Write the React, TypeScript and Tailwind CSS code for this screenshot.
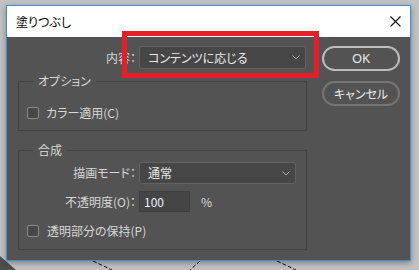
import React from "react";

const font = "font-['Noto_Sans_CJK_JP','Noto_Sans',sans-serif] [font-feature-settings:'palt']";

function Chevron() {
  return (
    <svg width="8" height="5" viewBox="0 0 8 5" className="shrink-0">
      <path d="M0.5 0.5 L4 4 L7.5 0.5" fill="none" stroke="#a8a8a8" strokeWidth="1" />
    </svg>
  );
}

function Checkbox() {
  return <div className="w-[12px] h-[12px] rounded-[2px] border border-[#8a8a8a] bg-[#474747] shrink-0" />;
}

export default function App() {
  return (
    <div className={`relative w-[419px] h-[270px] overflow-hidden bg-[#c2c2c2] pt-[5px] pl-[6px] ${font}`}>
      {/* background marks */}
      <svg className="absolute left-0 top-0" width="419" height="270" viewBox="0 0 419 270">
        <polygon points="0,256 0,270 16,270" fill="#3a3a3a" opacity="0.85" />
        <line x1="93" y1="261" x2="112" y2="270" stroke="#111" strokeWidth="1" strokeDasharray="4 2" />
        <line x1="200" y1="261" x2="190" y2="270" stroke="#111" strokeWidth="1" strokeDasharray="4 2" />
        <line x1="277" y1="261" x2="296" y2="270" stroke="#111" strokeWidth="1" strokeDasharray="4 2" />
      </svg>

      <div className="relative w-[405px] h-[256px] border border-[#3a8fdf] flex flex-col shadow-[0_2px_6px_rgba(0,0,0,0.35)]">
        {/* title bar */}
        <div className="h-[31px] bg-white flex items-center justify-between pl-[9px] pr-[9px] shrink-0">
          <span className="text-[12px] text-black leading-none">塗りつぶし</span>
          <svg width="11" height="11" viewBox="0 0 11 11">
            <path d="M0.5 0.5 L10.5 10.5 M10.5 0.5 L0.5 10.5" stroke="#111" strokeWidth="1.1" />
          </svg>
        </div>

        {/* content */}
        <div className="flex-1 bg-[#535353] flex pt-[9px] pl-[11px] text-[12px] text-[#d8d8d8]">
          {/* left column */}
          <div className="w-[289px] flex flex-col">
            <div className="flex items-center h-[23px]">
              <div className="w-[118px] text-right leading-none">内容：</div>
              <div className="ml-[3px] w-[167px] h-[23px] rounded-[3px] border border-[#636363] bg-[#464646] flex items-center justify-between pl-[8px] pr-[5px]">
                <span className="text-[#ececec] leading-none">コンテンツに応じる</span>
                <Chevron />
              </div>
            </div>

            <fieldset className="mt-[4px] border border-[#414141] px-0 pt-[18px] pb-[11px] m-0 min-w-0">
              <legend className="ml-[14px] px-[5px] h-[16px] leading-[16px] text-[#d8d8d8]">オプション</legend>
              <div className="flex items-center pl-[8px] h-[12px]">
                <Checkbox />
                <span className="ml-[7px] leading-none">カラー適用(C)</span>
              </div>
            </fieldset>

            <fieldset className="mt-[11px] border border-[#414141] px-0 pt-[4px] pb-[12px] m-0 min-w-0">
              <legend className="ml-[14px] px-[5px] h-[16px] leading-[16px] text-[#d8d8d8]">合成</legend>
              <div className="flex items-center h-[22px]">
                <div className="w-[117px] text-right leading-none">描画モード：</div>
                <div className="ml-[3px] w-[157px] h-[22px] rounded-[3px] border border-[#636363] bg-[#464646] flex items-center justify-between pl-[8px] pr-[5px]">
                  <span className="text-[#ececec] leading-none">通常</span>
                  <Chevron />
                </div>
              </div>
              <div className="flex items-center h-[21px] mt-[7px]">
                <div className="w-[117px] text-right leading-none">不透明度(O)：</div>
                <div className="ml-[3px] w-[51px] h-[21px] border border-[#3e3e3e] bg-[#454545] flex items-center pl-[4px]">
                  <span className="text-[#eef2f6] leading-none">100</span>
                </div>
                <span className="ml-[11px] leading-none">%</span>
              </div>
              <div className="flex items-center pl-[8px] h-[12px] mt-[13px]">
                <Checkbox />
                <span className="ml-[8px] leading-none">透明部分の保持(P)</span>
              </div>
            </fieldset>
          </div>

          {/* right column */}
          <div className="ml-[15px] flex flex-col gap-[10px]">
            <div className="w-[78px] h-[25px] rounded-full border-2 border-[#bdbdbd] flex items-center justify-center text-[#ececec] text-[13px] leading-none font-['Noto_Sans',sans-serif]">
              OK
            </div>
            <div className="w-[78px] h-[25px] rounded-full border-2 border-[#767676] flex items-center justify-center text-[#ececec] leading-none">
              キャンセル
            </div>
          </div>
        </div>
      </div>

      {/* red annotation box */}
      <div className="absolute left-[122px] top-[31px] w-[197px] h-[47px] border-[5px] border-[#e41f28]" />
    </div>
  );
}
